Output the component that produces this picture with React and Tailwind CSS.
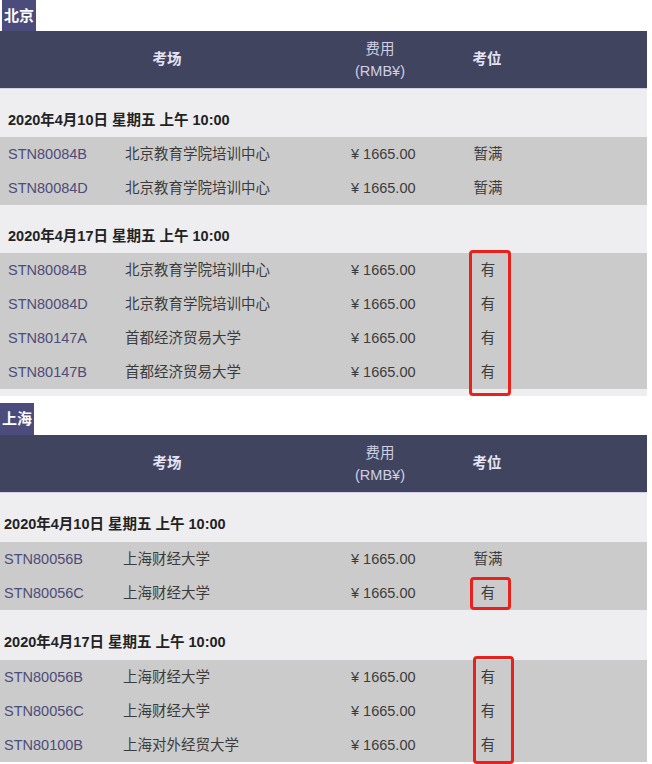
import React from "react";

const font = { fontFamily: '"Liberation Sans", "Noto Sans CJK SC", sans-serif' };

const sections = [
  {
    city: "北京",
    tag: "ml-[2px] h-[31px] leading-[31px]",
    codeCol: "w-[117px] pl-2",
    venueCol: "w-[226px] pl-2",
    datePad: "pl-2",
    dateRow: ["h-[48px] pb-[7px]", "h-[48px] pb-[7px]"],
    groups: [
      {
        date: "2020年4月10日 星期五 上午 10:00",
        rows: [
          ["STN80084B", "北京教育学院培训中心", "暂满"],
          ["STN80084D", "北京教育学院培训中心", "暂满"],
        ],
      },
      {
        date: "2020年4月17日 星期五 上午 10:00",
        rows: [
          ["STN80084B", "北京教育学院培训中心", "有"],
          ["STN80084D", "北京教育学院培训中心", "有"],
          ["STN80147A", "首都经济贸易大学", "有"],
          ["STN80147B", "首都经济贸易大学", "有"],
        ],
      },
    ],
  },
  {
    city: "上海",
    tag: "h-[32px] leading-[32px]",
    codeCol: "w-[115px] pl-1",
    venueCol: "w-[228px] pl-2",
    datePad: "pl-1",
    dateRow: ["h-[49px] pb-[8px]", "h-[50px] pb-[8px]"],
    groups: [
      {
        date: "2020年4月10日 星期五 上午 10:00",
        rows: [
          ["STN80056B", "上海财经大学", "暂满"],
          ["STN80056C", "上海财经大学", "有"],
        ],
      },
      {
        date: "2020年4月17日 星期五 上午 10:00",
        rows: [
          ["STN80056B", "上海财经大学", "有"],
          ["STN80056C", "上海财经大学", "有"],
          ["STN80100B", "上海对外经贸大学", "有"],
        ],
      },
    ],
  },
];

function Header() {
  return (
    <div className="flex h-[58px] items-center border-b border-[#cfd0e6] bg-[#41445f] pt-px text-[14.5px]">
      <div className="w-[334px] text-center font-bold text-[#e4e4f4]">考场</div>
      <div className="w-[92px] text-center leading-[22px] text-[#cfd0e6]">
        <div>费用</div>
        <div>(RMB¥)</div>
      </div>
      <div className="w-[122px] text-center font-bold text-[#e4e4f4]">考位</div>
    </div>
  );
}

function Row({ row, s }) {
  return (
    <div className="flex h-[34px] items-center bg-[#cbcbcb] pt-px text-[14.5px]">
      <div className={`${s.codeCol} text-[#4e4c78]`}>{row[0]}</div>
      <div className={`${s.venueCol} text-[#3c3c3c]`}>{row[1]}</div>
      <div className="w-[123px] pl-2 text-[#3c3c3c]">¥ 1665.00</div>
      <div className="w-[44px] text-center text-[#3c3c3c]">{row[2]}</div>
    </div>
  );
}

function Section({ s, children, last }) {
  return (
    <div className={`relative ${last ? "" : "pb-[7px]"}`}>
      <div className={`inline-block bg-[#4c4c7c] px-[2px] text-[15px] font-bold text-white ${s.tag}`}>
        {s.city}
      </div>
      <div className="w-[647px]">
        <Header />
        {s.groups.map((g, i) => (
          <div key={i}>
            <div className={`flex items-end bg-[#eeedf0] text-[14.5px] font-bold leading-[20px] text-[#222] ${s.datePad} ${s.dateRow[i]}`}>
              {g.date}
            </div>
            {g.rows.map((r, j) => (
              <Row key={j} row={r} s={s} />
            ))}
          </div>
        ))}
        {!last && <div className="h-[7px] bg-[#eeedf0]" />}
      </div>
      {children}
    </div>
  );
}

export default function App() {
  return (
    <div className="h-[764px] w-[652px] overflow-hidden bg-white" style={font}>
      <Section s={sections[0]}>
        <div className="absolute left-[469px] top-[250px] h-[146px] w-[42px] rounded-[4px] border-[3px] border-[#e8211c]" />
      </Section>
      <Section s={sections[1]} last>
        <div className="absolute left-[470px] top-[174px] h-[33px] w-[41px] rounded-[4px] border-[3px] border-[#e8211c]" />
        <div className="absolute left-[473px] top-[253px] h-[108px] w-[41px] rounded-[4px] border-[3px] border-[#e8211c]" />
      </Section>
    </div>
  );
}
